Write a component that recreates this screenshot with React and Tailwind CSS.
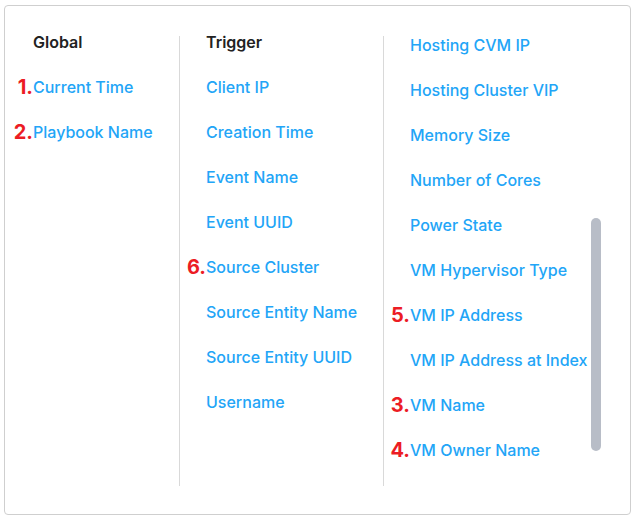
const globalItems = [
  { label: "Current Time", mark: "1." },
  { label: "Playbook Name", mark: "2." },
]

const triggerItems = [
  { label: "Client IP" },
  { label: "Creation Time" },
  { label: "Event Name" },
  { label: "Event UUID" },
  { label: "Source Cluster", mark: "6." },
  { label: "Source Entity Name" },
  { label: "Source Entity UUID" },
  { label: "Username" },
]

const vmItems = [
  { label: "Hosting CVM IP" },
  { label: "Hosting Cluster VIP" },
  { label: "Memory Size" },
  { label: "Number of Cores" },
  { label: "Power State" },
  { label: "VM Hypervisor Type" },
  { label: "VM IP Address", mark: "5." },
  { label: "VM IP Address at Index" },
  { label: "VM Name", mark: "3." },
  { label: "VM Owner Name", mark: "4." },
]

const Item = ({ label, mark }) => (
  <div className="h-[45px] flex items-center">
    <span className="relative text-[16px] font-medium text-[#22a5f7] whitespace-nowrap">
      {mark && (
        <span className="absolute right-full top-1/2 -translate-y-1/2 text-[20px] font-bold text-[#ec1c24] leading-none">
          {mark}
        </span>
      )}
      {label}
    </span>
  </div>
)

export default function App() {
  return (
    <div
      className="w-[633px] h-[517px] bg-white pt-[5px] pl-[4px]"
      style={{ fontFamily: "Inter, 'Open Sans', sans-serif" }}
    >
      <div className="relative w-[627px] h-[510px] border border-[#cfcfcf] rounded-[4px] overflow-hidden">
        <div className="flex mt-[30px] h-[450px]">
          <div className="w-[174px] pl-[28px]">
            <div className="h-[28px] leading-[12px] text-[16px] font-semibold text-[#222]">Global</div>
            {globalItems.map((it) => (
              <Item key={it.label} {...it} />
            ))}
          </div>
          <div className="w-[204px] border-l border-[#d9d9d9] pl-[26px]">
            <div className="h-[28px] leading-[12px] text-[16px] font-semibold text-[#222]">Trigger</div>
            {triggerItems.map((it) => (
              <Item key={it.label} {...it} />
            ))}
          </div>
          <div className="flex-1 border-l border-[#d9d9d9] pl-[26px]">
            <div className="-mt-[14px]">
              {vmItems.map((it) => (
                <Item key={it.label} {...it} />
              ))}
            </div>
          </div>
        </div>
        <div className="absolute left-[586px] top-[212px] w-[10px] h-[233px] rounded-full bg-[#b8bdc7]" />
      </div>
    </div>
  )
}
